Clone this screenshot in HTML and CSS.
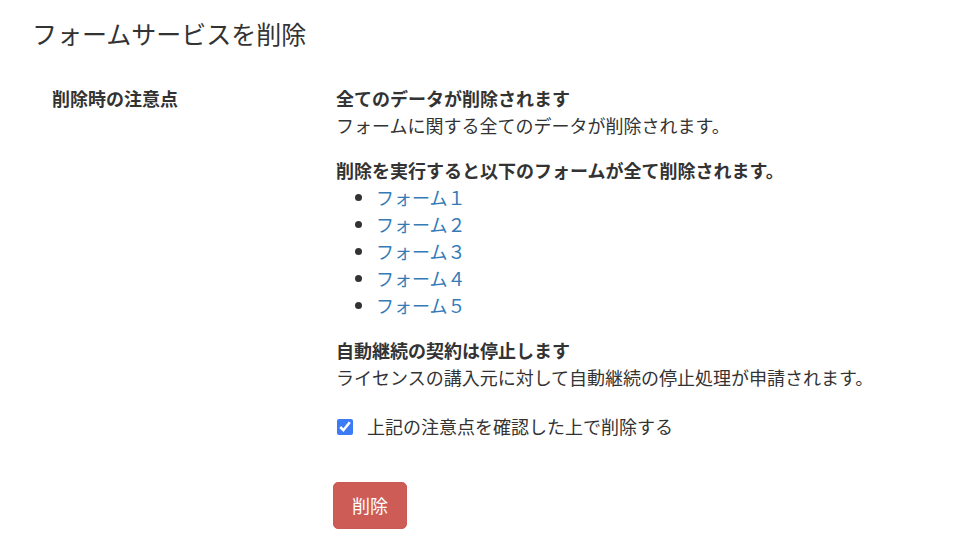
FILE: index.html
```html
<!DOCTYPE html>
<html lang="ja">
<head>
<meta charset="utf-8">
<title>フォームサービスを削除</title>
<link rel="stylesheet" href="styles.css">
</head>
<body>
<div class="page">
  <h1 class="title">フォームサービスを削除</h1>
  <div class="row">
    <div class="label">削除時の注意点</div>
    <div class="content">
      <div class="block">
        <p class="head">全てのデータが削除されます</p>
        <p class="text">フォームに関する全てのデータが削除されます。</p>
      </div>
      <div class="block">
        <p class="head">削除を実行すると以下のフォームが全て削除されます。</p>
        <ul class="forms">
          <li><a href="#">フォーム１</a></li>
          <li><a href="#">フォーム２</a></li>
          <li><a href="#">フォーム３</a></li>
          <li><a href="#">フォーム４</a></li>
          <li><a href="#">フォーム５</a></li>
        </ul>
      </div>
      <div class="block last">
        <p class="head">自動継続の契約は停止します</p>
        <p class="text">ライセンスの講入元に対して自動継続の停止処理が申請されます。</p>
      </div>
      <label class="confirm">
        <input type="checkbox" class="check" checked>
        <span>上記の注意点を確認した上で削除する</span>
      </label>
      <div class="actions">
        <button type="button" class="btn-danger">削除</button>
      </div>
    </div>
  </div>
</div>
</body>
</html>
```
FILE: styles.css
```css
html, body {
  margin: 0;
  padding: 0;
  background: #ffffff;
}
body {
  font-family: "Noto Sans CJK JP", "Noto Sans", sans-serif;
  font-size: 18px;
  line-height: 27px;
  color: #333333;
}
.page {
  padding: 19px 0 0 32px;
}
.title {
  margin: 0;
  font-size: 25px;
  line-height: 28px;
  font-weight: 400;
  color: #333333;
}
.row {
  display: grid;
  grid-template-columns: 304px 1fr;
  margin-top: 38px;
}
.label {
  padding-left: 20px;
  font-weight: 700;
}
.block {
  margin-bottom: 18px;
}
.block.last {
  margin-bottom: 0;
}
.head {
  margin: 0;
  font-weight: 700;
}
.text {
  margin: 0;
}
.forms {
  margin: 0;
  padding-left: 40px;
}
.forms a {
  color: #337ab7;
  text-decoration: none;
}
.confirm {
  display: flex;
  align-items: center;
  gap: 14px;
  margin-top: 22px;
}
.check {
  width: 16px;
  height: 16px;
  margin: 0 0 0 1px;
  accent-color: #3b7cf5;
}
.actions {
  margin-top: 42px;
}
.btn-danger {
  margin-left: -3px;
  height: 47px;
  padding: 0 18px;
  border: 1px solid #c95a55;
  border-radius: 5px;
  background: #cd5c57;
  color: #ffffff;
  font-family: "Noto Sans CJK JP", "Noto Sans", sans-serif;
  font-size: 18px;
  line-height: 27px;
}
```
